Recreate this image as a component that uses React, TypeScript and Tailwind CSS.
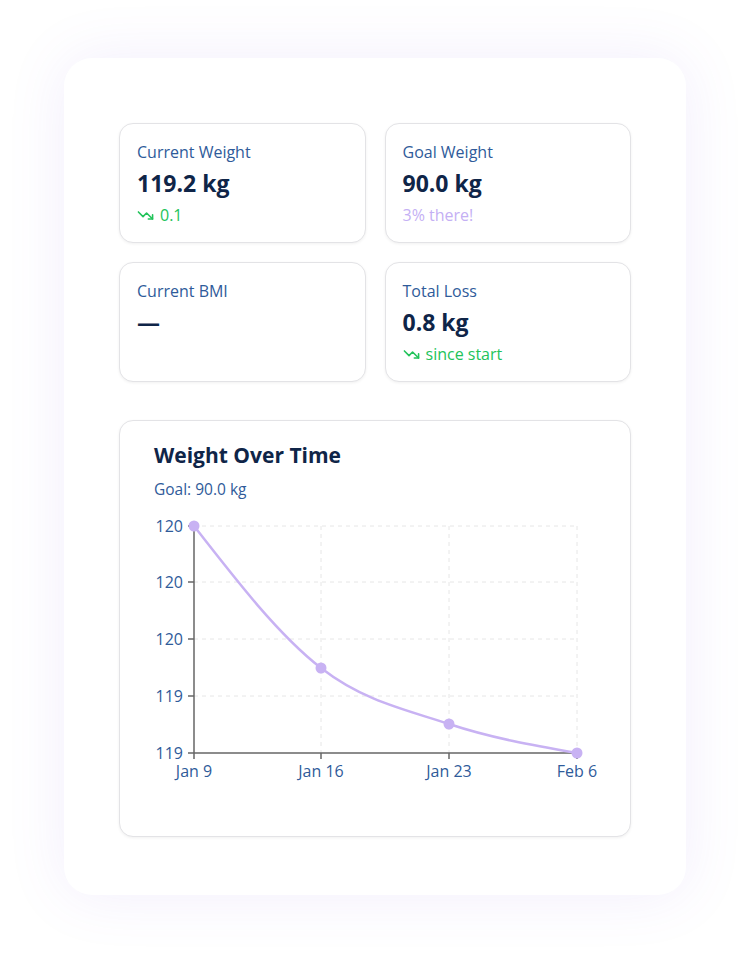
import { TrendingDown } from "lucide-react";

type Stat = {
  label: string;
  value: string;
  sub?: string;
  tone?: "green" | "purple";
  trend?: boolean;
};

const stats: Stat[] = [
  { label: "Current Weight", value: "119.2 kg", sub: "0.1", tone: "green", trend: true },
  { label: "Goal Weight", value: "90.0 kg", sub: "3% there!", tone: "purple" },
  { label: "Current BMI", value: "—" },
  { label: "Total Loss", value: "0.8 kg", sub: "since start", tone: "green", trend: true },
];

// chart coords are relative to the svg (origin at card x=119, y=505 on the page)
const X0 = 74;
const XS = [74, 201, 329, 457];
const YS = [20, 76, 133, 190, 247];
const yLabels = ["120", "120", "120", "119", "119"];
const xLabels = ["Jan 9", "Jan 16", "Jan 23", "Feb 6"];
const points: [number, number][] = [
  [74, 20],
  [201, 162],
  [329, 218],
  [457, 247],
];
const curve =
  "M74,20 C116.5,74.7 158.5,128.9 201,162 C243.5,195.1 286.5,203.9 329,218 C371.5,232.1 414.5,239.6 457,247";

function StatCard({ s }: { s: Stat }) {
  const subColor = s.tone === "purple" ? "text-[#c4b0f4]" : "text-[#22c35a]";
  return (
    <div className="h-[120px] rounded-[14px] border border-[#e3e3e6] bg-white pl-[17px] pt-[13px] shadow-[0_1px_3px_rgba(0,0,0,0.06)]">
      <p className="text-[16px] leading-[31px] text-[#2f5b9a]">{s.label}</p>
      <p className="text-[23px] font-bold leading-[31px] text-[#0f2548]">{s.value}</p>
      {s.sub && (
        <p className={`flex items-center gap-1.5 text-[16px] leading-[32px] ${subColor}`}>
          {s.trend && <TrendingDown className="h-[17px] w-[17px]" strokeWidth={2.25} />}
          {s.sub}
        </p>
      )}
    </div>
  );
}

function Chart() {
  return (
    <svg width="511" height="290" className="block" style={{ fontFamily: "'Open Sans', sans-serif" }}>
      {/* grid */}
      {YS.slice(0, 4).map((y) => (
        <line key={y} x1={X0} x2={457} y1={y} y2={y} stroke="#e6e6e6" strokeDasharray="4 4" />
      ))}
      {XS.slice(1).map((x) => (
        <line key={x} x1={x} x2={x} y1={20} y2={247} stroke="#e6e6e6" strokeDasharray="4 4" />
      ))}
      {/* axes */}
      <line x1={X0} x2={X0} y1={18} y2={247} stroke="#666" strokeWidth="1.5" />
      <line x1={X0} x2={457} y1={247} y2={247} stroke="#666" strokeWidth="1.5" />
      {YS.map((y, i) => (
        <g key={i}>
          <line x1={X0 - 6} x2={X0} y1={y} y2={y} stroke="#666" strokeWidth="1.5" />
          <text x={X0 - 11} y={y + 6} textAnchor="end" fontSize="16" fill="#2f5b9a">
            {yLabels[i]}
          </text>
        </g>
      ))}
      {XS.map((x, i) => (
        <g key={x}>
          <line x1={x} x2={x} y1={247} y2={253} stroke="#666" strokeWidth="1.5" />
          <text x={x} y={271} textAnchor="middle" fontSize="16" fill="#2f5b9a">
            {xLabels[i]}
          </text>
        </g>
      ))}
      {/* line */}
      <path d={curve} fill="none" stroke="#c8b2f3" strokeWidth="2.5" />
      {points.map(([x, y]) => (
        <circle key={x} cx={x} cy={y} r="5.5" fill="#c8b2f3" />
      ))}
    </svg>
  );
}

export default function App() {
  return (
    <div className="min-h-screen bg-white px-[64px] pt-[58px] pb-[69px]" style={{ fontFamily: "'Open Sans', sans-serif" }}>
      <div className="rounded-[28px] bg-white px-[55px] pt-[65px] pb-[58px] shadow-[0_0_60px_rgba(124,92,230,0.10)]">
        <div className="grid grid-cols-2 gap-[19px]">
          {stats.map((s) => (
            <StatCard key={s.label} s={s} />
          ))}
        </div>

        <div className="mt-[38px] h-[417px] rounded-[14px] border border-[#e3e3e6] bg-white shadow-[0_1px_3px_rgba(0,0,0,0.06)]">
          <div className="pl-[34px] pt-[19px]">
            <h2 className="text-[21px] font-bold leading-[30px] text-[#0f2548]">Weight Over Time</h2>
            <p className="mt-[5px] text-[15.5px] leading-[28px] text-[#2f5b9a]">Goal: 90.0 kg</p>
          </div>
          <div className="mt-[3px]">
            <Chart />
          </div>
        </div>
      </div>
    </div>
  );
}
